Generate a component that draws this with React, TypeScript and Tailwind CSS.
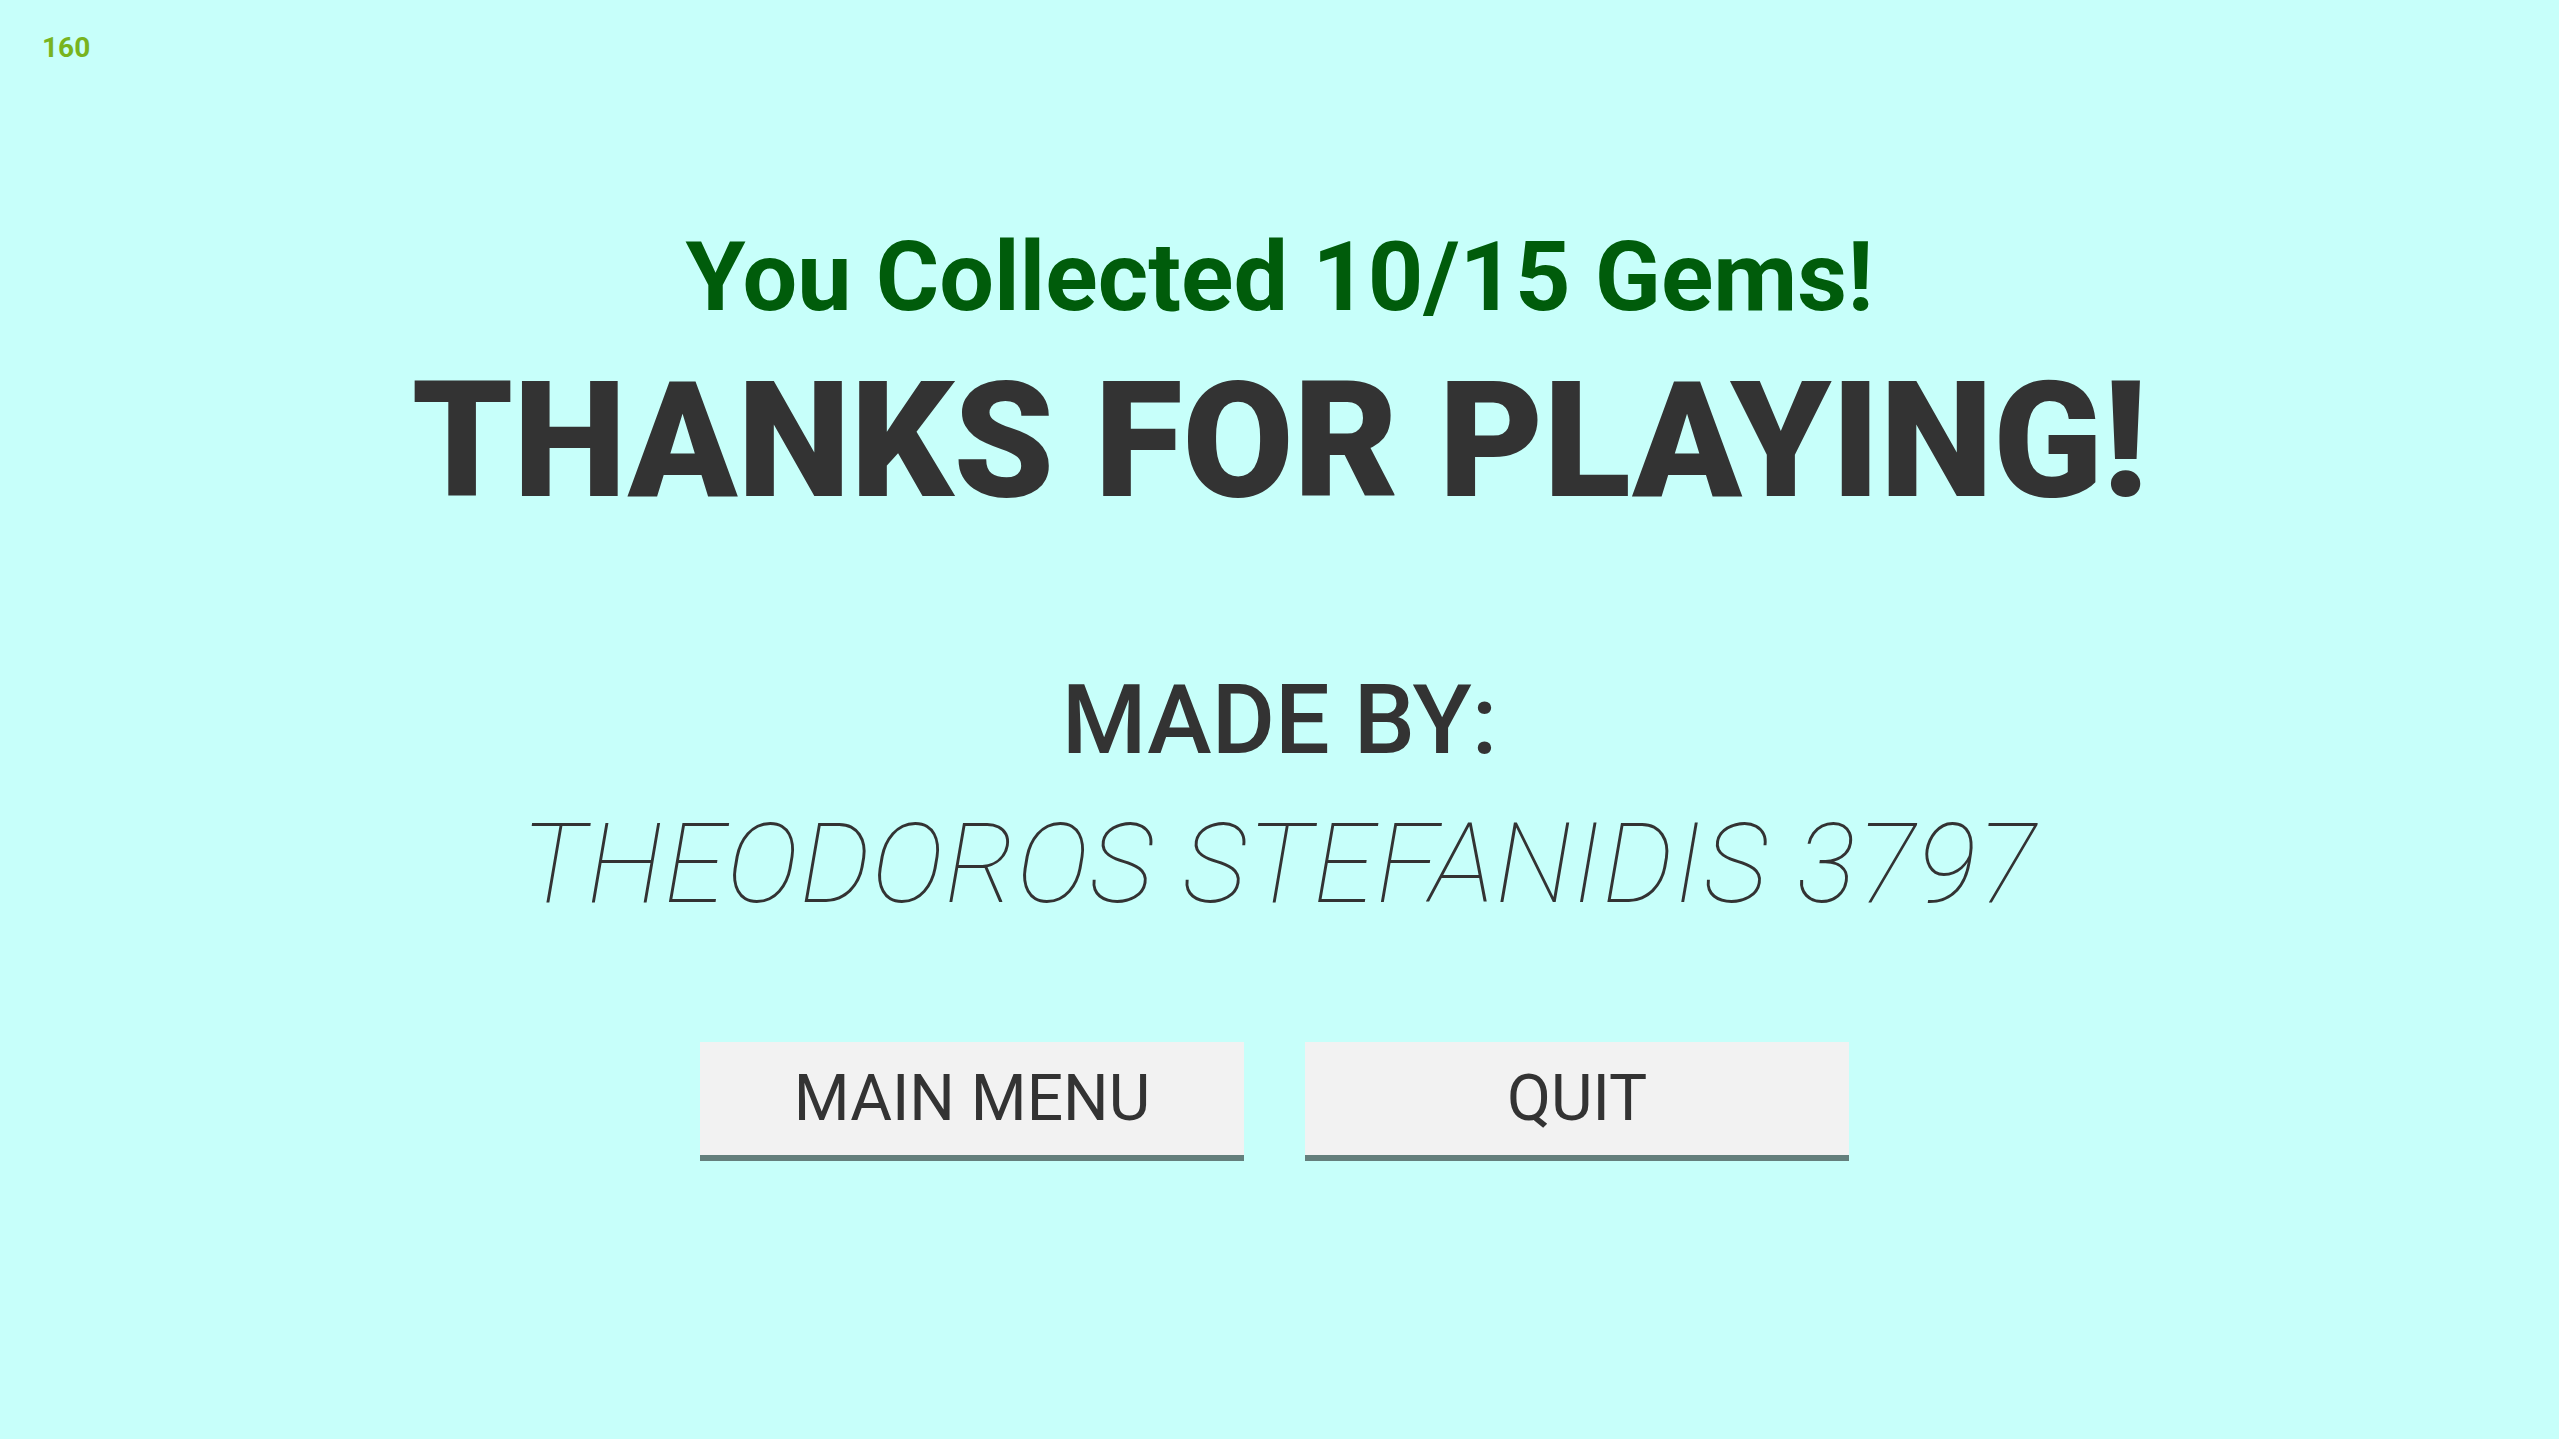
export default function App() {
  const buttons = ["MAIN MENU", "QUIT"];

  return (
    <div
      className="relative min-h-[1439px] w-full bg-[#c7fffa] text-[#333333]"
      style={{ fontFamily: "Roboto, 'Liberation Sans', sans-serif" }}
    >
      {/* fps counter */}
      <div className="absolute left-[42px] top-[34px] text-[28px] font-bold leading-none text-[#78b41e]">
        160
      </div>

      <div className="flex flex-col items-center pt-[229px]">
        <h2 className="text-[97px] font-bold leading-none text-[#005c0b]">
          You Collected 10/15 Gems!
        </h2>
        <h1 className="mt-[35px] text-[161px] font-black leading-none">
          THANKS FOR PLAYING!
        </h1>

        <p className="mt-[150px] text-[97px] font-medium leading-none">MADE BY:</p>
        <p className="mt-[40px] text-[111px] font-thin italic leading-none tracking-[1.4px]">
          THEODOROS STEFANIDIS 3797
        </p>

        <div className="mt-[122px] mr-[10px] flex gap-[61px]">
          {buttons.map((label) => (
            <button
              key={label}
              className="flex h-[119px] w-[544px] items-center justify-center border-b-[6px] border-[#647f7c] bg-[#f2f2f2] text-[64px] font-normal leading-none"
            >
              {label}
            </button>
          ))}
        </div>
      </div>
    </div>
  );
}
